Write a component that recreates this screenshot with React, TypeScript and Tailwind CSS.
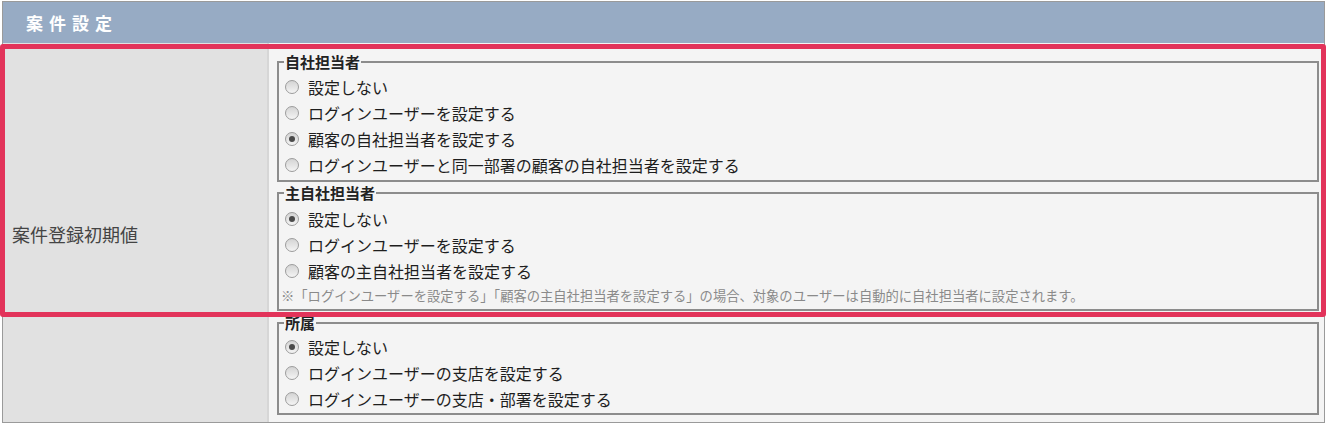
import React from 'react';

type Option = { label: string; checked?: boolean };

const groups: { legend: string; options: Option[]; note?: string; cls: string }[] = [
  {
    legend: '自社担当者',
    cls: 'pt-[4px] pb-[2px]',
    options: [
      { label: '設定しない' },
      { label: 'ログインユーザーを設定する' },
      { label: '顧客の自社担当者を設定する', checked: true },
      { label: 'ログインユーザーと同一部署の顧客の自社担当者を設定する' },
    ],
  },
  {
    legend: '主自社担当者',
    cls: 'pt-[5px] pb-[3px]',
    options: [
      { label: '設定しない', checked: true },
      { label: 'ログインユーザーを設定する' },
      { label: '顧客の主自社担当者を設定する' },
    ],
    note: '※「ログインユーザーを設定する」「顧客の主自社担当者を設定する」の場合、対象のユーザーは自動的に自社担当者に設定されます。',
  },
  {
    legend: '所属',
    cls: 'mt-[1px] pt-[3px] pb-[1px]',
    options: [
      { label: '設定しない', checked: true },
      { label: 'ログインユーザーの支店を設定する' },
      { label: 'ログインユーザーの支店・部署を設定する' },
    ],
  },
];

function Radio({ checked }: { checked?: boolean }) {
  return (
    <span className="w-[14px] h-[14px] rounded-full border border-[#9c9c9c] bg-gradient-to-b from-[#d4d4d4] to-[#f4f4f4] flex items-center justify-center shrink-0">
      {checked && <span className="w-[6px] h-[6px] rounded-full bg-[#4a4a4a]" />}
    </span>
  );
}

function Group({ legend, options, note, cls }: { legend: string; options: Option[]; note?: string; cls: string }) {
  return (
    <fieldset className={`border-2 border-[#8c8c8c] px-[5px] min-w-0 ${cls}`}>
      <legend className="px-[1px] text-[15px] leading-[16px] font-bold text-[#222]">{legend}</legend>
      {options.map((o) => (
        <label key={o.label} className="flex items-center gap-[9px] h-[26px] pl-[1px] text-[16px] text-[#1e1e1e]">
          <Radio checked={o.checked} />
          <span>{o.label}</span>
        </label>
      ))}
      {note && <div className="mt-[2px] text-[13.3px] leading-[20px] text-[#8a8a8a] -ml-[3px]">{note}</div>}
    </fieldset>
  );
}

export default function App() {
  return (
    <div
      className="relative w-[1327px] h-[424px] bg-white"
      style={{ fontFamily: '"Noto Sans CJK JP", "Noto Sans", sans-serif' }}
    >
      <div className="mx-[2px] mt-[1px] border border-[#9a9a9a] h-[422px] flex flex-col">
        <div className="h-[41px] bg-[#97abc4] flex items-center pl-[23px] text-white font-bold text-[17px] tracking-[6px] shrink-0">
          案件設定
        </div>
        <div className="flex flex-1">
          <div className="w-[266px] bg-[#e1e1e1] border-r-2 border-[#d6d6d6] flex items-center pl-[9px] text-[18px] text-[#444] pt-[4px]">
            案件登録初期値
          </div>
          <div className="flex-1 bg-[#f4f4f4] pl-[8px] pr-[5px] pt-[11px] flex flex-col gap-[3px]">
            {groups.map((g) => (
              <Group key={g.legend} {...g} />
            ))}
          </div>
        </div>
      </div>
      <div className="absolute left-0 top-[43px] w-[1326px] h-[273px] border-[5px] border-[#e2335a] rounded-[3px] pointer-events-none" />
    </div>
  );
}
